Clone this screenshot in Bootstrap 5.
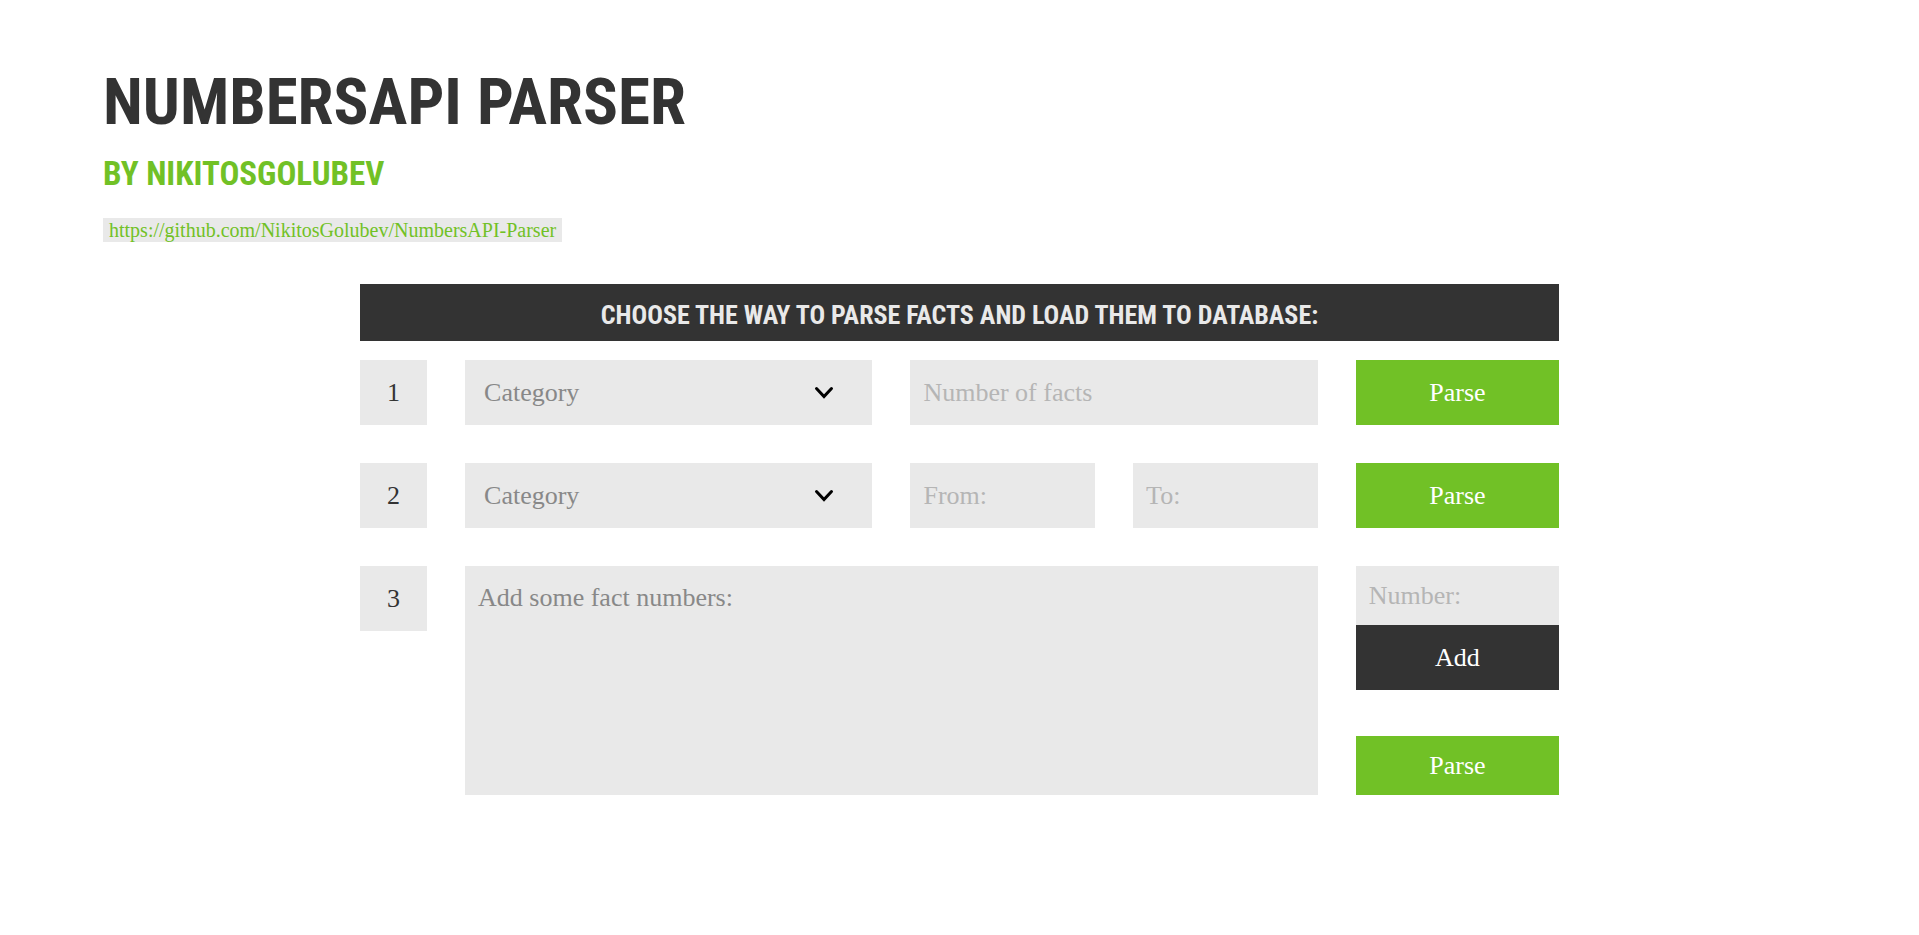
<!DOCTYPE html>
<html lang="en">
<head>
<meta charset="utf-8">
<meta name="viewport" content="width=device-width, initial-scale=1">
<title>NumbersAPI Parser</title>
<link rel="stylesheet" href="https://cdn.jsdelivr.net/npm/bootstrap@5.3.0/dist/css/bootstrap.min.css">
<style>
  :root { --ink: #333; --panel: #e9e9e9; --accent: #71c126; --hint: #b5b5b5; --muted: #888; }
  body { font-family: "Liberation Serif", "Times New Roman", serif; font-size: 26px; line-height: 30px; color: var(--ink); }
  .display-face { font-family: "Roboto Condensed", Roboto, sans-serif; font-weight: 700; text-transform: uppercase; }
  .page-head { padding: 56px 103px 0; }
  .page-title { font-size: 65px; line-height: 92px; }
  .page-author { font-size: 33px; line-height: 52px; color: var(--accent); }
  .repo-link { font-size: 20px; line-height: 24px; padding: 0 6px; margin-top: 18px; background: var(--panel); color: var(--accent); }
  .repo-link:hover { color: var(--ink); }
  .parser { max-width: 1199px; margin-top: 42px; }
  .banner { background: var(--ink); color: var(--panel); font-size: 26px; line-height: 34px; padding: 14px 16px 9px; margin-bottom: 19px; }
  .lines { display: grid; gap: 38px; }
  .line { display: grid; grid-template-columns: 67fr 407fr 407fr 203fr; column-gap: 38px; align-items: start; }
  .pair { display: grid; grid-template-columns: 1fr 1fr; column-gap: 38px; }
  .wide-cell { grid-column: span 2; }
  .step { background: var(--panel); height: 65px; }
  .field, .field:focus { background-color: var(--panel); border: 0; border-radius: 0; color: var(--ink); font-size: 26px; line-height: 30px; padding: 0 13px; height: 65px; }
  .field::placeholder { color: var(--hint); opacity: 1; }
  .field-area, .field-area:focus { height: 100%; padding-top: 17px; resize: none; }
  .field-area::placeholder { color: var(--muted); }
  .field-pick, .field-pick:focus { color: var(--muted); padding: 0 56px 0 19px; background-position: right 38px center; background-size: 20px 14px;
    background-image: url("data:image/svg+xml,%3Csvg xmlns='http://www.w3.org/2000/svg' viewBox='0 0 20 14'%3E%3Cpath d='M2.5 2.5 10 10.5 17.5 2.5' fill='none' stroke='%23000' stroke-width='3' stroke-linecap='round'/%3E%3C/svg%3E"); }
  .action { border: 0; border-radius: 0; font-size: 26px; line-height: 30px; height: 65px; padding: 0; color: #fff; background: var(--accent); }
  .action:hover { color: #fff; background: #62aa1f; }
  .action-dark { background: var(--ink); }
  .low { height: 59px; }
  .after-gap { margin-top: 46px; }
</style>
</head>
<body>
<header class="page-head">
  <h1 class="display-face page-title mb-0">NumbersAPI Parser</h1>
  <h2 class="display-face page-author mb-0">by NikitosGolubev</h2>
  <a class="repo-link d-inline-block text-decoration-none align-top" href="https://github.com/NikitosGolubev/NumbersAPI-Parser">https://github.com/NikitosGolubev/NumbersAPI-Parser</a>
</header>
<main class="parser mx-auto">
  <h3 class="display-face banner text-center">Choose the way to parse facts and load them to database:</h3>
  <div class="lines">
    <form class="line">
      <div class="step d-flex align-items-center justify-content-center">1</div>
      <select class="form-select field field-pick" aria-label="Category"><option>Category</option></select>
      <input class="form-control field" type="text" aria-label="Number of facts" placeholder="Number of facts">
      <button class="btn action w-100" type="button">Parse</button>
    </form>
    <form class="line">
      <div class="step d-flex align-items-center justify-content-center">2</div>
      <select class="form-select field field-pick" aria-label="Category"><option>Category</option></select>
      <div class="pair">
        <input class="form-control field" type="text" aria-label="From" placeholder="From:">
        <input class="form-control field" type="text" aria-label="To" placeholder="To:">
      </div>
      <button class="btn action w-100" type="button">Parse</button>
    </form>
    <form class="line">
      <div class="step d-flex align-items-center justify-content-center">3</div>
      <div class="wide-cell align-self-stretch">
        <textarea class="form-control field field-area" aria-label="Fact numbers" placeholder="Add some fact numbers:" readonly></textarea>
      </div>
      <div class="d-flex flex-column">
        <input class="form-control field low" type="text" aria-label="Number" placeholder="Number:">
        <button class="btn action action-dark w-100" type="button">Add</button>
        <button class="btn action low after-gap w-100" type="button">Parse</button>
      </div>
    </form>
  </div>
</main>
<script src="https://cdn.jsdelivr.net/npm/bootstrap@5.3.0/dist/js/bootstrap.bundle.min.js"></script>
</body>
</html>
